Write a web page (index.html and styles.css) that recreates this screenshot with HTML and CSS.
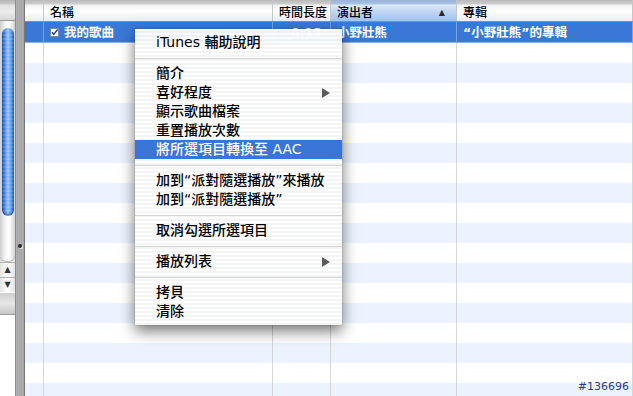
FILE: index.html
```html
<!DOCTYPE html>
<html lang="zh-Hant">
<head>
    <meta charset="UTF-8">
    <title>iTunes 歌曲列表</title>
    <link rel="stylesheet" href="styles.css">
</head>
<body>
    <div class="window">
        <div class="source">
            <div class="source-head"></div>
            <div class="scroller">
                <div class="track"><div class="thumb"></div></div>
                <div class="arrow">&#9650;</div>
                <div class="arrow">&#9660;</div>
            </div>
            <div class="source-foot"></div>
        </div>

        <div class="splitter"><span class="grip"></span></div>

        <div class="list">
            <div class="head">
                <div class="hcell"></div>
                <div class="hcell">名稱</div>
                <div class="hcell right">時間長度</div>
                <div class="hcell sorted">演出者<span class="sort">&#9650;</span></div>
                <div class="hcell">專輯</div>
            </div>
            <div class="rows">
                <div class="row selected">
                    <span></span>
                    <span class="name">
                        <svg class="check" width="9" height="9" viewBox="0 0 9 9">
                            <rect x="0.5" y="0.5" width="8" height="8" fill="#fff" stroke="#7c8aa6"/>
                            <path d="M2 4.2 L3.8 6.4 L7.6 1.4" fill="none" stroke="#1d3f8f" stroke-width="1.5"/>
                        </svg>
                        我的歌曲
                    </span>
                    <span class="right">0:13</span>
                    <span>小野壯熊</span>
                    <span>“小野壯熊”的專輯</span>
                </div>
                <div class="row"><span></span><span></span><span></span><span></span><span></span></div>
                <div class="row"><span></span><span></span><span></span><span></span><span></span></div>
                <div class="row"><span></span><span></span><span></span><span></span><span></span></div>
                <div class="row"><span></span><span></span><span></span><span></span><span></span></div>
                <div class="row"><span></span><span></span><span></span><span></span><span></span></div>
                <div class="row"><span></span><span></span><span></span><span></span><span></span></div>
                <div class="row"><span></span><span></span><span></span><span></span><span></span></div>
                <div class="row"><span></span><span></span><span></span><span></span><span></span></div>
                <div class="row"><span></span><span></span><span></span><span></span><span></span></div>
                <div class="row"><span></span><span></span><span></span><span></span><span></span></div>
                <div class="row"><span></span><span></span><span></span><span></span><span></span></div>
                <div class="row"><span></span><span></span><span></span><span></span><span></span></div>
                <div class="row"><span></span><span></span><span></span><span></span><span></span></div>
                <div class="row"><span></span><span></span><span></span><span></span><span></span></div>
                <div class="row"><span></span><span></span><span></span><span></span><span></span></div>
                <div class="row"><span></span><span></span><span></span><span></span><span></span></div>
                <div class="row"><span></span><span></span><span></span><span></span><span></span></div>
                <div class="row"><span></span><span></span><span></span><span></span><span></span></div>
            </div>
        </div>
    </div>

    <!-- context menu over the list -->
    <div class="menu">
        <div class="item">iTunes 輔助說明</div>
        <div class="sep"></div>
        <div class="item">簡介</div>
        <div class="item">喜好程度<span class="sub"></span></div>
        <div class="item">顯示歌曲檔案</div>
        <div class="item">重置播放次數</div>
        <div class="item active">將所選項目轉換至 AAC</div>
        <div class="sep"></div>
        <div class="item">加到“派對隨選播放”來播放</div>
        <div class="item">加到“派對隨選播放”</div>
        <div class="sep"></div>
        <div class="item">取消勾選所選項目</div>
        <div class="sep"></div>
        <div class="item">播放列表<span class="sub"></span></div>
        <div class="sep"></div>
        <div class="item">拷貝</div>
        <div class="item">清除</div>
    </div>

    <div class="tag">#136696</div>
</body>
</html>
```

FILE: styles.css
```css
body {
    margin: 0;
    width: 633px;
    height: 396px;
    overflow: hidden;
    position: relative;
    font-family: "DejaVu Sans", "Noto Sans CJK TC", sans-serif;
    color: #000;
    background: #fff;
}
.window {
    display: flex;
    height: 396px;
}

/* left pane scrollbar */
.source {
    width: 15px;
    display: flex;
    flex-direction: column;
    background: #fff;
}
.source-head {
    height: 20px;
    border-bottom: 1px solid #9a9a9a;
    background: linear-gradient(#b4b4b4 0, #c9c9c9 4px, #e2e2e2 5px, #ececec 12px, #d6d6d6 20px);
}
.scroller {
    height: 271px;
    display: flex;
    flex-direction: column;
    background: linear-gradient(to right, #d8d8d8, #f6f6f6 30%, #ffffff 60%, #e0e0e0);
}
.track {
    flex: 1;
    padding: 7px 1px 0 2px;
    border-radius: 0 0 6px 6px;
    background: linear-gradient(to right, #cfcfcf, #f4f4f4 35%, #ffffff 60%, #d4d4d4);
    box-shadow: inset 0 -1px 0 #b8b8b8;
}
.thumb {
    height: 188px;
    border-radius: 6px;
    background: repeating-linear-gradient(rgba(255,255,255,0) 0 2px, rgba(255,255,255,0.12) 2px 4px),
                linear-gradient(to right, #1e4fb4, #4f8de6 25%, #9cc6fa 50%, #5d9bee 75%, #2458bd);
    box-shadow: inset 0 -2px 2px rgba(0,0,40,0.35);
}
.arrow {
    height: 14px;
    border-top: 1px solid #b4b4b4;
    font-size: 8px;
    line-height: 14px;
    text-align: center;
    color: #333;
    background: linear-gradient(to right, #e4e4e4, #ffffff 50%, #e4e4e4);
}
.source-foot {
    height: 21px;
    margin-top: 1px;
    border-bottom: 1px solid #9a9a9a;
    background: linear-gradient(#cfcfcf, #e6e6e6 50%, #c6c6c6);
}

/* divider between panes */
.splitter {
    width: 8px;
    border-left: 1px solid #8c8c8c;
    border-right: 1px solid #767676;
    background: repeating-linear-gradient(to right, #b2b2b2 0 1px, #a4a4a4 1px 2px);
    position: relative;
}
.grip {
    position: absolute;
    left: 2px;
    top: 244px;
    width: 4px;
    height: 4px;
    border-radius: 50%;
    background: #2b2b2b;
    box-shadow: 1px 1px 0 #e8e8e8;
}

/* song list */
.list {
    flex: 1;
    background: #fff;
}
.head, .row {
    display: grid;
    grid-template-columns: 19px 229px 58px 126px 1fr;
}
.head {
    height: 21px;
    border-bottom: 1px solid #8e8e8e;
    background: linear-gradient(#b9b9b9 0, #cdcdcd 4px, #f1f1f1 5px, #ffffff 11px, #ececec 21px);
}
.hcell {
    padding: 5px 5px 0 6px;
    font-size: 12px;
    font-weight: 500;
    line-height: 16px;
    border-right: 1px solid #c6c6c6;
    white-space: nowrap;
}
.hcell.right {
    text-align: right;
    padding-right: 3px;
}
.hcell.sorted {
    display: flex;
    justify-content: space-between;
    background: linear-gradient(#98b2d8 0, #a9c2e4 4px, #dce9fa 5px, #c3d8f4 11px, #a2c2ec 21px);
}
.sort {
    font-size: 8px;
    color: #2a2a2a;
    padding-right: 6px;
}
.row {
    height: 20px;
}
.row:nth-child(odd) {
    background: #edf3fe;
}
.row span {
    border-right: 1px solid #d6d6d6;
    padding: 0 6px;
    font-size: 12.5px;
    line-height: 21px;
    white-space: nowrap;
    overflow: hidden;
}
.row.selected {
    height: 21px;
    background: #3a78d8;
    color: #fff;
    font-weight: bold;
    box-shadow: inset 0 -1px 0 #8fb4ec;
}
.row.selected span {
    border-right-color: #7aa3e4;
}
.row .right {
    text-align: right;
    padding-right: 8px;
}
.name {
    display: flex;
    align-items: center;
    gap: 5px;
}
.check {
    flex: none;
}

/* context menu */
.menu {
    position: absolute;
    left: 135px;
    top: 29px;
    width: 207px;
    padding: 4px 0;
    background: repeating-linear-gradient(rgba(255,255,255,0.97) 0 2px, rgba(244,244,244,0.97) 2px 4px);
    box-shadow: 0 6px 14px rgba(0,0,0,0.55), 0 0 1px rgba(0,0,0,0.4);
    font-size: 14px;
    font-weight: 500;
}
.item {
    height: 19px;
    line-height: 19px;
    padding: 0 12px 0 21px;
    display: flex;
    justify-content: space-between;
    align-items: center;
    white-space: nowrap;
}
.item.active {
    background: #3875d7;
    color: #fff;
}
.sep {
    height: 12px;
    display: flex;
    align-items: center;
}
.sep::after {
    content: "";
    flex: 1;
    height: 1px;
    background: #d4d4d4;
}
.sub {
    width: 0;
    height: 0;
    border-left: 8px solid #5c5c5c;
    border-top: 5px solid transparent;
    border-bottom: 5px solid transparent;
}

.tag {
    position: absolute;
    right: 4px;
    bottom: 3px;
    font-family: "DejaVu Sans", sans-serif;
    font-size: 11px;
    color: #26389a;
}
```
